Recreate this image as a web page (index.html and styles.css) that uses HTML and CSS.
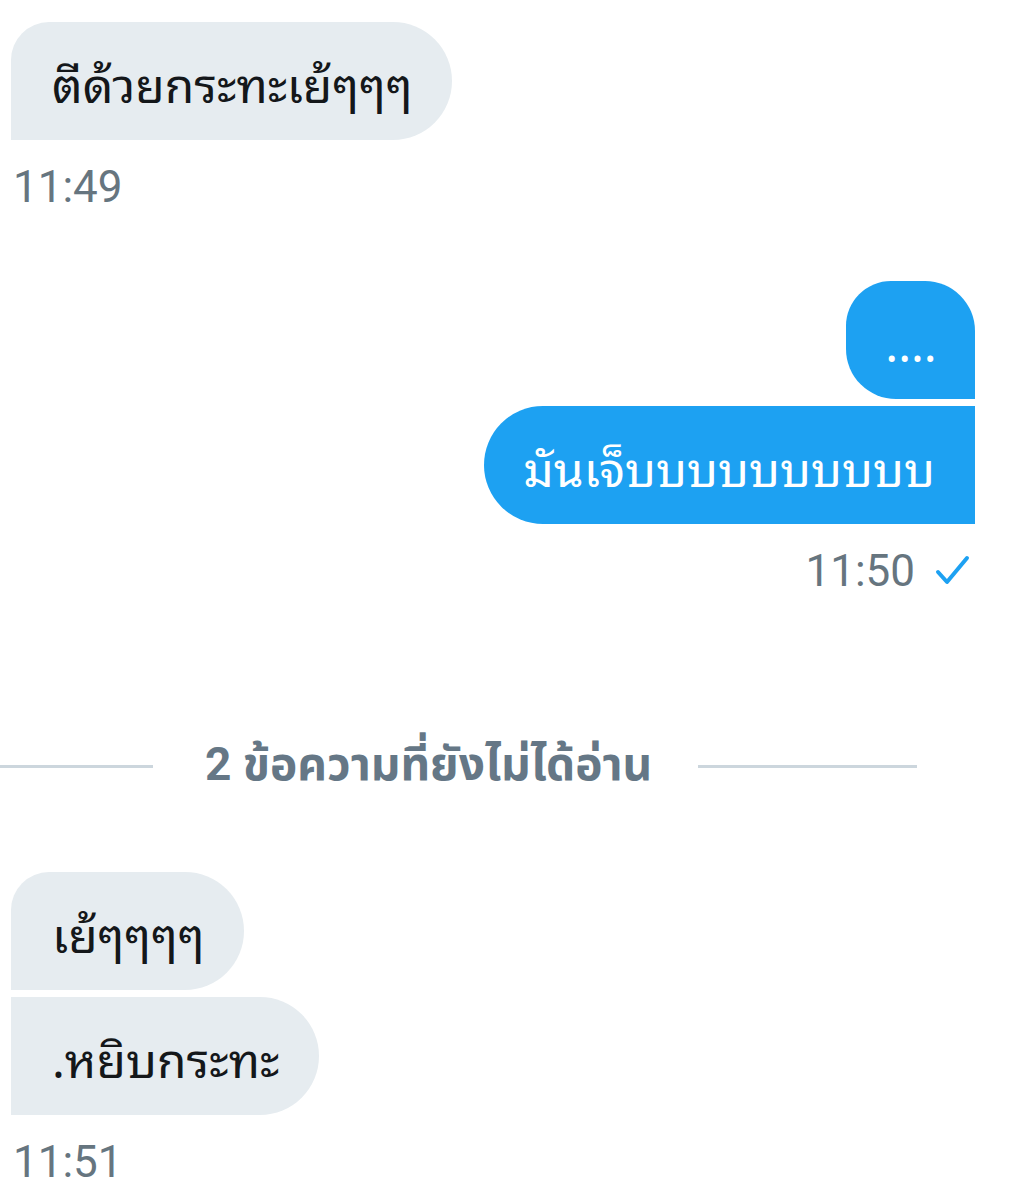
FILE: index.html
```html
<!DOCTYPE html>
<html lang="th">
<head>
<meta charset="utf-8">
<link rel="stylesheet" href="styles.css">
</head>
<body>
<div class="chat">
  <div class="msg in first">
    <div class="bubble in-first-last">ตีด้วยกระทะเย้ๆๆๆ</div>
  </div>
  <div class="time">11:49</div>

  <div class="msg out group-start">
    <div class="bubble out-first dots">....</div>
  </div>
  <div class="msg out">
    <div class="bubble out-last">มันเจ็บบบบบบบบบบ</div>
  </div>
  <div class="time out-time">11:50
    <svg class="check" width="36" height="32" viewBox="0 0 36 32"><path d="M3 17 L12 27 L32 3" fill="none" stroke="#1da1f2" stroke-width="4" stroke-linecap="round" stroke-linejoin="round"/></svg>
  </div>

  <div class="divider">
    <span class="line left"></span>
    <span class="divider-text">2 ข้อความที่ยังไม่ได้อ่าน</span>
    <span class="line right"></span>
  </div>

  <div class="msg in">
    <div class="bubble in-first">เย้ๆๆๆๆ</div>
  </div>
  <div class="msg in">
    <div class="bubble in-last">.หยิบกระทะ</div>
  </div>
  <div class="time">11:51</div>
</div>
</body>
</html>
```

FILE: styles.css
```css
html, body {
  margin: 0;
  padding: 0;
  background: #ffffff;
}

.chat {
  display: flex;
  flex-direction: column;
  padding: 22px 40px 0 11px;
  font-family: "Noto Sans Thai Looped", "Loma", "Garuda", "Tlwg Typo", "Noto Sans Thai", "Noto Sans", sans-serif;
}

.msg {
  display: flex;
  margin-bottom: 7px;
}

.msg.out {
  justify-content: flex-end;
}

.msg.group-start {
  margin-top: 69px;
}

.bubble {
  box-sizing: border-box;
  height: 118px;
  display: flex;
  align-items: center;
  font-size: 48px;
  padding: 0 40px 0 41px;
}

.in-first-last,
.in-first,
.in-last {
  background: #e6ecf0;
  color: #14171a;
}

.in-first-last,
.in-first {
  border-radius: 38px 59px 59px 0;
}

.in-last {
  border-radius: 0 59px 59px 0;
}

.out-first,
.out-last {
  background: #1da1f2;
  color: #ffffff;
}

.out-first {
  width: 129px;
  border-radius: 45px 50px 0 50px;
  justify-content: center;
}

.out-last {
  border-radius: 59px 0 0 59px;
  padding: 0 40px 0 39px;
}

.time {
  font-family: "Roboto", "Noto Sans", sans-serif;
  font-size: 44px;
  line-height: 50px;
  color: #66757f;
  margin-top: 15px;
  padding-left: 2px;
}

.out-time {
  display: flex;
  align-items: center;
  justify-content: flex-end;
  gap: 20px;
  padding-right: 4px;
}

.divider {
  display: flex;
  align-items: center;
  margin: 140px 0 0 -11px;
  height: 60px;
}

.line {
  height: 3px;
  background: #ccd6dd;
}

.line.left {
  width: 153px;
}

.line.right {
  width: 219px;
}

.divider-text {
  font-family: "Roboto", "Noto Sans Thai", sans-serif;
  font-weight: bold;
  font-size: 46px;
  color: #657786;
  padding: 0 46px 0 52px;
}

.divider + .msg {
  margin-top: 76px;
}
```
